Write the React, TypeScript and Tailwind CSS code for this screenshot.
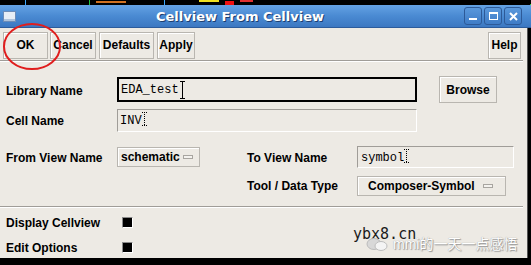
import React from 'react';

const sans = { fontFamily: '"Liberation Sans", Arial, sans-serif' };
const mono = { fontFamily: '"Liberation Mono", "Courier New", monospace' };

function Btn({ label, className = '' }: { label: string; className?: string }) {
  return (
    <div
      className={`flex items-center justify-center h-[27px] bg-[#edeae4] border border-[#b9b6b0] shadow-[inset_1px_1px_0_#ffffff] text-[12px] font-bold text-black ${className}`}
    >
      {label}
    </div>
  );
}

function Cursor() {
  return (
    <svg width="5" height="18" viewBox="0 0 5 18" className="ml-[1px]">
      <path d="M0 0.5h5M0 17.5h5M2.5 0v18" stroke="#000" strokeWidth="1" />
    </svg>
  );
}

function DottedCursor() {
  return (
    <svg width="5" height="14" viewBox="0 0 5 14">
      <path d="M0 0.5h5M0 13.5h5M2.5 0v14" stroke="#000" strokeWidth="1" strokeDasharray="1 1" />
    </svg>
  );
}

function Dropdown({ label, className = '' }: { label: string; className?: string }) {
  return (
    <div
      className={`flex items-center justify-between h-[20px] pl-[3px] pr-[6px] bg-[#edeae4] border border-[#b9b6b0] shadow-[inset_1px_1px_0_#ffffff] text-[12px] font-bold ${className}`}
    >
      <span>{label}</span>
      <span className="w-[10px] h-[4px] border border-[#a8a5a0] bg-[#f4f2ee]" />
    </div>
  );
}

function Separator() {
  return <div className="w-[523px] h-[2px] border-t border-[#a09d98] border-b border-b-white" />;
}

function Check() {
  return <div className="w-[11px] h-[11px] bg-black border border-[#8a8a8a] border-r-white border-b-white" />;
}

export default function App() {
  return (
    <div className="relative w-[531px] h-[265px] bg-black overflow-hidden text-black" style={sans}>
      {/* top strip from the screen behind */}
      <div className="h-[5px] flex items-start">
        <div className="ml-[25px] w-[1px] h-[5px] bg-[#3aa8ff]" />
        <div className="ml-[63px] w-[1px] h-[5px] bg-[#20c040]" />
        <div className="ml-[6px] w-[30px] h-[2px] mt-[1px] bg-[#d07020]" />
        <div className="ml-[38px] w-[1px] h-[5px] bg-[#3aa8ff]" />
        <div className="ml-[34px] w-[20px] h-[2px] bg-[#f0e020]" />
        <div className="ml-[6px] w-[9px] h-[4px] mt-[1px] bg-[#f01010]" />
        <div className="ml-[6px] w-[13px] h-[2px] bg-[#e03030]" />
        <div className="ml-auto w-[1px] h-[1px] mt-[4px] bg-[#30d030]" />
      </div>

      {/* title bar */}
      <div className="h-[23px] flex items-center bg-gradient-to-b from-[#64a2e4] via-[#4a8ad2] to-[#3c78c2] border-b border-[#2c5c9c]">
        <div className="ml-[3px] w-[13px] h-[11px] bg-[#e8eef6] border border-[#6c8cb8] shadow-[inset_0_-2px_0_#b0c4dc]" />
        <div
          className="flex-1 text-center text-white text-[13px] font-bold pt-[1px]"
          style={{ fontFamily: '"DejaVu Sans", sans-serif', textShadow: '1px 1px 0 #1d3f70' }}
        >
          Cellview From Cellview
        </div>
        <div className="flex gap-[2px] mr-[9px]">
          {['min', 'max', 'close'].map((k) => (
            <div
              key={k}
              className="w-[18px] h-[18px] rounded-[3px] border border-[#2d5a98] bg-gradient-to-b from-[#5a98dc] to-[#3f7cc6] flex items-center justify-center"
            >
              {k === 'min' && <div className="w-[8px] h-[2px] bg-white mt-[6px]" />}
              {k === 'max' && <div className="w-[9px] h-[8px] border-[1.5px] border-white border-t-[2.5px]" />}
              {k === 'close' && (
                <svg width="9" height="9" viewBox="0 0 9 9">
                  <path d="M1 1l7 7M8 1l-7 7" stroke="#fff" strokeWidth="2" />
                </svg>
              )}
            </div>
          ))}
        </div>
      </div>

      {/* window body */}
      <div className="w-[528px] h-[230px] bg-[#edeae4] border-r border-[#555] flex flex-col">
        {/* toolbar */}
        <div className="h-[32px] flex items-center pl-[3px] pr-[6px] pt-[2px]">
          <Btn label="OK" className="w-[45px]" />
          <Btn label="Cancel" className="w-[46px] ml-[2px]" />
          <Btn label="Defaults" className="w-[55px] ml-[3px]" />
          <Btn label="Apply" className="w-[38px] ml-[3px]" />
          <Btn label="Help" className="w-[33px] ml-auto" />
        </div>
        <Separator />

        {/* form */}
        <div className="flex flex-col pt-[15px] pl-[6px] text-[12px] font-bold">
          <div className="flex items-center h-[25px]">
            <div className="w-[111px] pt-[2px]">Library Name</div>
            <div className="w-[300px] h-[25px] border-2 border-black bg-[#edeae4] flex items-center pl-[2px] text-[12px] font-normal" style={mono}>
              EDA_test
              <Cursor />
            </div>
            <Btn label="Browse" className="w-[58px] h-[23px] ml-[22px]" />
          </div>

          <div className="flex items-center h-[23px] mt-[7px]">
            <div className="w-[111px] pt-[1px]">Cell Name</div>
            <div className="w-[300px] h-[23px] border border-[#a09d98] border-r-white border-b-white flex items-start pt-[2px] pl-[2px] text-[12px] font-normal" style={mono}>
              INV
              <DottedCursor />
            </div>
          </div>

          <div className="flex items-center h-[22px] mt-[14px]">
            <div className="w-[111px] pt-[1px]">From View Name</div>
            <Dropdown label="schematic" className="w-[83px]" />
            <div className="ml-[47px] w-[110px] pt-[1px]">To View Name</div>
            <div className="w-[157px] h-[22px] border border-[#a09d98] border-r-white border-b-white flex items-start pt-[2px] pl-[3px] text-[12px] font-normal" style={mono}>
              symbol
              <DottedCursor />
            </div>
          </div>

          <div className="flex items-center h-[20px] mt-[8px]">
            <div className="ml-[241px] w-[110px]">Tool / Data Type</div>
            <Dropdown label="Composer-Symbol" className="w-[149px] pl-[10px] pr-[12px]" />
          </div>
        </div>

        <div className="mt-[10px]">
          <Separator />
        </div>

        <div className="flex flex-col pl-[6px] pt-[7px] text-[12px] font-bold">
          <div className="flex items-center h-[15px]">
            <div className="w-[116px]">Display Cellview</div>
            <Check />
          </div>
          <div className="flex items-center h-[15px] mt-[10px]">
            <div className="w-[116px]">Edit Options</div>
            <Check />
          </div>
        </div>
      </div>

      {/* red annotation circle */}
      <svg className="absolute left-0 top-0 pointer-events-none" width="531" height="265">
        <ellipse cx="32" cy="46.5" rx="28" ry="22.5" fill="none" stroke="#e01e1e" strokeWidth="2" />
      </svg>

      {/* watermark */}
      <div className="absolute left-[353px] top-[227px] text-[15px] leading-none text-[#1a1a1a]" style={{ fontFamily: '"DejaVu Sans Mono", monospace' }}>
        ybx8.cn
      </div>
      <div className="absolute left-[366px] top-[237px] flex items-center">
        <svg width="22" height="13" viewBox="0 0 22 13">
          <ellipse cx="8" cy="6" rx="7" ry="5.5" fill="#d8d8d8" stroke="#bdbdbd" />
          <ellipse cx="15" cy="8" rx="6" ry="4.5" fill="#f4f4f4" stroke="#bdbdbd" />
        </svg>
        <span
          className="ml-[5px] text-[14px] leading-none text-white"
          style={{
            fontFamily: '"Liberation Sans", "Noto Sans CJK SC", sans-serif',
            textShadow: '0 0 1px #8a8a8a, 1px 1px 1px #9a9a9a',
          }}
        >
          mmi的一天一点感悟
        </span>
      </div>
    </div>
  );
}
